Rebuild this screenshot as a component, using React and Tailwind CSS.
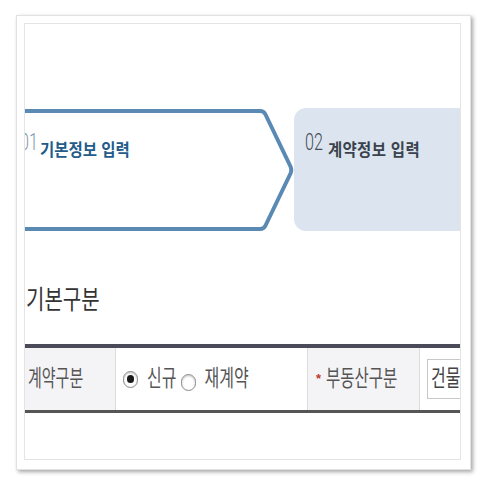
import React from "react";

const Radio = ({ checked }) => (
  <span className="inline-flex w-[15px] h-[17px] rounded-full border-[1.5px] border-[#8a8a8a] bg-white items-center justify-center shrink-0 shadow-[inset_0_1px_2px_rgba(0,0,0,0.25)]">
    {checked && <span className="w-[7px] h-[8px] rounded-full bg-[#1a1a1a]" />}
  </span>
);

const StepOne = () => (
  <div className="relative w-[269px] h-[124px] shrink-0">
    <svg className="absolute inset-0" width="269" height="124" viewBox="0 0 269 124">
      <path
        d="M -10 3 L 235 3 Q 239 3 240.5 6.5 L 265.5 58.5 Q 267 62 265.5 65.5 L 240.5 117.5 Q 239 121 235 121 L -10 121"
        fill="none"
        stroke="#5a8ab4"
        strokeWidth="4"
        strokeLinejoin="round"
      />
    </svg>
    <div className="relative flex items-start pt-[23px] ml-[-5px]">
      <span className="w-[20px] shrink-0 text-[23px] leading-none font-light text-[#7f98ad] font-['Roboto',sans-serif]">
        <span className="inline-block origin-left scale-x-[0.7]">01</span>
      </span>
      <span className="mt-[11px] text-[15.5px] leading-none font-bold text-[#235b8a]">
        <span className="inline-block scale-y-[1.12]">기본정보 입력</span>
      </span>
    </div>
  </div>
);

const StepTwo = () => (
  <div className="w-[200px] h-[123px] shrink-0 bg-[#dce5ef] rounded-l-[12px]">
    <div className="flex items-start pt-[23px] pl-[11px]">
      <span className="w-[23px] shrink-0 text-[23px] leading-none font-light text-[#454c55] font-['Roboto',sans-serif]">
        <span className="inline-block origin-left scale-x-[0.7]">02</span>
      </span>
      <span className="mt-[11px] text-[15.5px] leading-none font-bold text-[#3a434d] tracking-[0.3px]">
        <span className="inline-block scale-y-[1.12]">계약정보 입력</span>
      </span>
    </div>
  </div>
);

export default function App() {
  return (
    <div className="w-[484px] h-[484px] bg-white pt-[15px] pl-[16px] font-['Liberation_Sans','Noto_Sans_CJK_KR',sans-serif]">
      <div className="w-[455px] h-[455px] border border-[#e2e2e2] bg-white p-[7px] shadow-[2px_2px_4px_rgba(0,0,0,0.35)]">
        <div className="w-[437px] h-[437px] border border-[#e4e4e4] overflow-hidden flex flex-col">
          <div className="flex mt-[84px]">
            <StepOne />
            <StepTwo />
          </div>

          <h2 className="mt-[58px] ml-[1px] text-[20px] leading-[21px] font-normal text-[#333]">
            <span className="inline-block scale-y-[1.3]">기본구분</span>
          </h2>

          <div className="mt-[33px] w-[436px] shrink-0 border-t-4 border-t-[#4a4a58] border-b-[3px] border-b-[#555] flex h-[69px] text-[#555]">
            <div className="w-[91px] shrink-0 bg-[#f4f4f6] border-r border-[#dcdcdc] flex items-center pl-[3px] text-[15px]">
              <span className="inline-block scale-y-[1.5]">계약구분</span>
            </div>
            <div className="w-[191px] shrink-0 flex items-center pl-[7px] text-[16px]">
              <Radio checked />
              <span className="inline-block scale-y-[1.45] ml-[9px]">신규</span>
              <span className="ml-[5px] mt-[6px] flex"><Radio /></span>
              <span className="inline-block scale-y-[1.45] ml-[8px]">재계약</span>
            </div>
            <div className="w-[113px] shrink-0 bg-[#f4f4f6] border-x border-[#dcdcdc] flex items-center pl-[8px] text-[15.5px]">
              <span className="text-[#c0392b] text-[13px] font-bold mr-[5px]">*</span>
              <span className="inline-block scale-y-[1.45]">부동산구분</span>
            </div>
            <div className="flex-1 flex items-center pl-[7px]">
              <div className="w-[80px] h-[40px] border border-[#c8c8c8] flex items-center pl-[3px] text-[16px] text-[#444] shrink-0">
                <span className="inline-block scale-y-[1.45]">건물</span>
              </div>
            </div>
          </div>
        </div>
      </div>
    </div>
  );
}
